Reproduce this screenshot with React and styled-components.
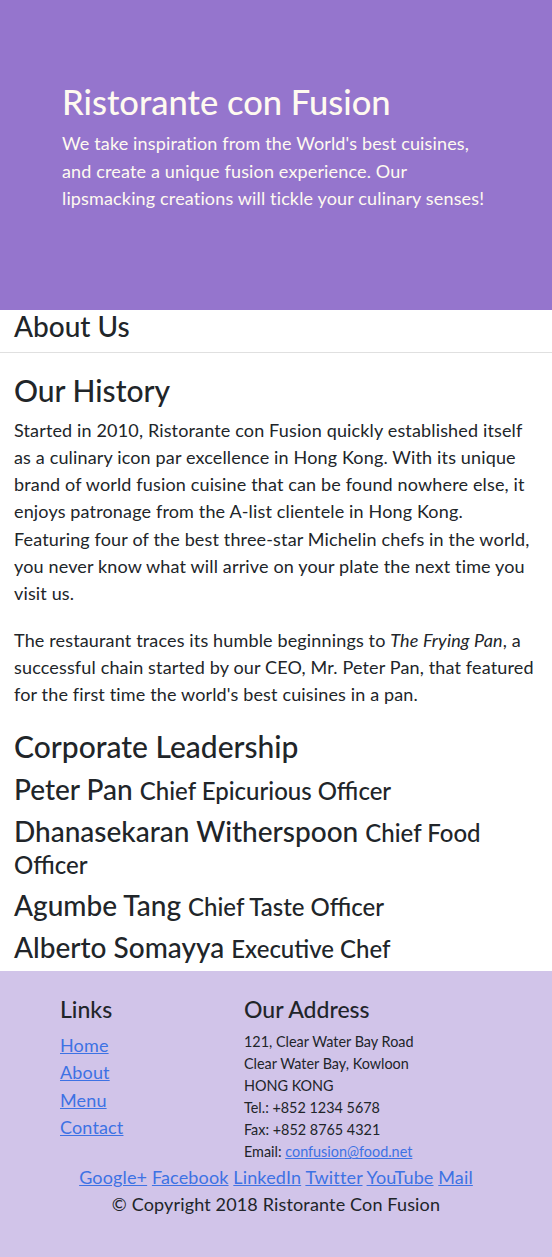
import React from 'react';
import styled, { createGlobalStyle } from 'styled-components';

const GlobalStyle = createGlobalStyle`
body {
  margin: 0;
  font-family: 'Lato', 'Liberation Sans', sans-serif;
  color: #212529;
  background: #fff;
  letter-spacing: 0.15px;
}
`

const Jumbotron = styled.header`
background: #9575CD;
color: #FFFAF0;
box-sizing: border-box;
height: 310px;
padding: 81px 62px 0;
`

const Title = styled.h1`
font-size: 34.5px;
font-weight: 500;
line-height: 1.2;
letter-spacing: 0;
margin: 0 0 8px;
`

const Lead = styled.p`
font-size: 18px;
line-height: 27.3px;
margin: 0;
`

const Main = styled.main`
padding: 0 14px;
`

const PageTitle = styled.h3`
font-size: 28px;
font-weight: 500;
line-height: 1.2;
letter-spacing: 0;
margin: 0 0 8px;
`

const Divider = styled.hr`
border: 0;
border-top: 1px solid rgba(0,0,0,.12);
margin: 0 -14px 19px;
`

const SectionTitle = styled.h2`
font-size: 30px;
font-weight: 500;
line-height: 36px;
letter-spacing: 0;
margin: 0 0 9px;
`

const Text = styled.p`
font-size: 18px;
line-height: 27.3px;
margin: 0 0 19px;
`

const Leader = styled.h3`
font-size: 28px;
font-weight: 500;
line-height: 32px;
letter-spacing: 0;
margin: 0 0 10px;
&:last-child { margin-bottom: 8px; }
`

const Role = styled.small`
font-size: 24px;
line-height: 24px;
`

const Footer = styled.footer`
background: #D1C4E9;
padding: 25px 0 50px;
`

const FooterGrid = styled.div`
display: grid;
grid-template-columns: 184px 1fr;
padding-left: 60px;
`

const FooterTitle = styled.h5`
font-size: 23px;
font-weight: 500;
line-height: 1.2;
letter-spacing: 0;
margin: 0 0 7px;
`

const LinkList = styled.ul`
list-style: none;
margin: 0;
padding: 2px 0 0;
font-size: 18px;
line-height: 27.3px;
`

const Link = styled.a`
color: #3d72e4;
text-decoration: underline;
`

const Address = styled.address`
font-style: normal;
font-size: 14.4px;
line-height: 22px;
letter-spacing: 0;
margin: 0;
padding-top: 1px;
`

const CenterRow = styled.div`
text-align: center;
font-size: 18px;
line-height: 27.3px;
padding-top: ${props => props.gap || 0}px;
`

const leaders = [
  ['Peter Pan', 'Chief Epicurious Officer'],
  ['Dhanasekaran Witherspoon', 'Chief Food Officer'],
  ['Agumbe Tang', 'Chief Taste Officer'],
  ['Alberto Somayya', 'Executive Chef'],
];

const socials = ['Google+', 'Facebook', 'LinkedIn', 'Twitter', 'YouTube', 'Mail'];

export default function App() {
  return (
    <>
      <GlobalStyle />
      <Jumbotron>
        <Title>Ristorante con Fusion</Title>
        <Lead>We take inspiration from the World's best cuisines, and create a unique fusion experience. Our lipsmacking creations will tickle your culinary senses!</Lead>
      </Jumbotron>
      <Main>
        <PageTitle>About Us</PageTitle>
        <Divider />
        <SectionTitle>Our History</SectionTitle>
        <Text>Started in 2010, Ristorante con Fusion quickly established itself as a culinary icon par excellence in Hong Kong. With its unique brand of world fusion cuisine that can be found nowhere else, it enjoys patronage from the A-list clientele in Hong Kong.  Featuring four of the best three-star Michelin chefs in the world, you never know what will arrive on your plate the next time you visit us.</Text>
        <Text>The restaurant traces its humble beginnings to <em>The Frying Pan</em>, a successful chain started by our CEO, Mr. Peter Pan, that featured for the first time the world's best cuisines in a pan.</Text>
        <SectionTitle>Corporate Leadership</SectionTitle>
        {leaders.map(([name, role]) => (
          <Leader key={name}>{name} <Role>{role}</Role></Leader>
        ))}
      </Main>
      <Footer>
        <FooterGrid>
          <div>
            <FooterTitle>Links</FooterTitle>
            <LinkList>
              <li><Link href="#">Home</Link></li>
              <li><Link href="#">About</Link></li>
              <li><Link href="#">Menu</Link></li>
              <li><Link href="#">Contact</Link></li>
            </LinkList>
          </div>
          <div>
            <FooterTitle>Our Address</FooterTitle>
            <Address>
              121, Clear Water Bay Road<br />
              Clear Water Bay, Kowloon<br />
              HONG KONG<br />
              Tel.: +852 1234 5678<br />
              Fax: +852 8765 4321<br />
              Email: <Link href="#">confusion@food.net</Link>
            </Address>
          </div>
        </FooterGrid>
        <CenterRow gap={1}>
          {socials.map((s, i) => (
            <React.Fragment key={s}>{i > 0 && ' '}<Link href="#">{s}</Link></React.Fragment>
          ))}
        </CenterRow>
        <CenterRow>© Copyright 2018 Ristorante Con Fusion</CenterRow>
      </Footer>
    </>
  );
}
